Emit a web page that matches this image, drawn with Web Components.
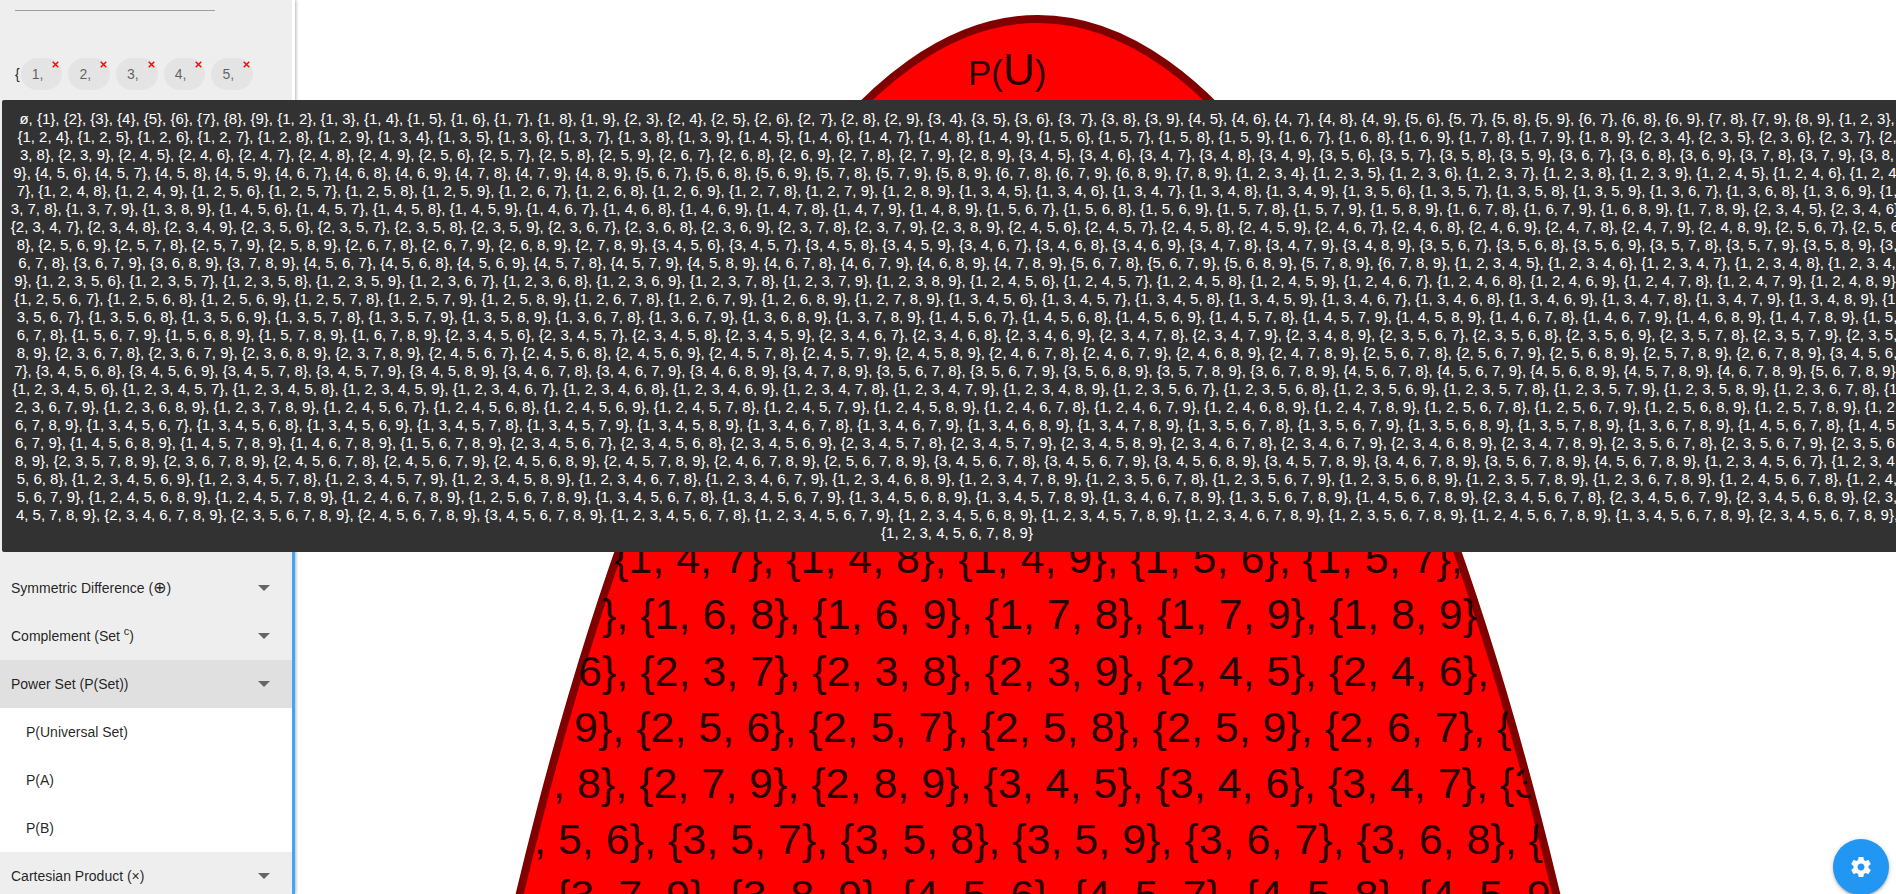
<!DOCTYPE html>
<html lang="en">
<head>
<meta charset="utf-8">
<title>Set Operations Visualizer</title>
<style>
  html, body { margin: 0; height: 100%; overflow: hidden; background: #fff; }
  body { font-family: "Liberation Sans", Arial, sans-serif; font-size: 15px; color: rgba(0, 0, 0, .87); }
</style>
</head>
<body>
<set-app></set-app>

<template id="set-app">
  <style>
    :host { display: flex; height: 100vh; position: relative; overflow: hidden; }
    set-sidebar { flex: none; width: 292px; }
    set-diagram { flex: 1; min-width: 0; }
    set-tooltip { position: absolute; left: 2px; right: -16px; top: 100px; z-index: 2; }
    set-fab { position: absolute; right: 7px; bottom: -1px; z-index: 1; }
    .symbol { font-family: "DejaVu Sans", sans-serif; font-size: 16px; line-height: 1; }
  </style>
  <set-sidebar>
    <set-chip>1,</set-chip>
    <set-chip>2,</set-chip>
    <set-chip>3,</set-chip>
    <set-chip>4,</set-chip>
    <set-chip>5,</set-chip>
    <set-row slot="ops">Symmetric Difference (<span class="symbol">⊕</span>)</set-row>
    <set-row slot="ops">Complement (Set <sup>c</sup>)</set-row>
    <set-row slot="ops" active>Power Set (P(Set))</set-row>
    <set-row slot="ops" sub>P(Universal Set)</set-row>
    <set-row slot="ops" sub>P(A)</set-row>
    <set-row slot="ops" sub>P(B)</set-row>
    <set-row slot="ops">Cartesian Product (×)</set-row>
  </set-sidebar>
  <set-diagram></set-diagram>
  <set-tooltip></set-tooltip>
  <set-fab></set-fab>
</template>

<template id="set-sidebar">
  <style>
    :host { display: flex; flex-direction: column; position: relative; background: #eee;
            border-right: 3px solid #fff; box-shadow: 1px 0 3px rgba(0, 0, 0, .3); z-index: 1; }
    .thumb { position: absolute; left: 100%; top: 300px; bottom: 0; width: 3px; background: #42a5f5; }
    input { display: block; box-sizing: border-box; width: 200px; height: 11px; margin: 0 15px; padding: 0;
            border: 0; border-bottom: 1px solid #9e9e9e; background: none; outline: none; font: inherit; }
    .members { display: flex; align-items: center; height: 32px; margin: 47px 0 0 15px; font-size: 14px; }
    .chips { display: flex; gap: 6px; margin-left: 1px; }
    nav { display: flex; flex-direction: column; margin-top: 474px; }
  </style>
  <input type="text" aria-label="Universal set members">
  <div class="members"><span>{</span><div class="chips"><slot></slot></div></div>
  <nav><slot name="ops"></slot></nav>
  <div class="thumb"></div>
</template>

<template id="set-chip">
  <style>
    :host { display: block; position: relative; flex: none; box-sizing: border-box; height: 32px;
            padding: 0 19px 0 11px; border-radius: 16px; background: #e4e4e4;
            font-size: 14px; line-height: 32px; color: rgba(0, 0, 0, .6); }
    button { position: absolute; top: 3px; right: 3px; width: 7px; height: 7px; padding: 0; border: 0; background: none; display: block; }
    svg { display: block; }
  </style>
  <slot></slot>
  <button type="button" aria-label="Remove"><svg width="7" height="7" viewBox="0 0 7 7"><path d="M.7 .7L6.3 6.3M6.3 .7L.7 6.3" stroke="#f00" stroke-width="1.4"/></svg></button>
</template>

<template id="set-row">
  <style>
    :host { display: block; }
    button { display: flex; align-items: center; justify-content: space-between; box-sizing: border-box;
             width: 100%; height: 48px; margin: 0; padding: 0 22px 0 11px; border: 0; background: #eee;
             font: inherit; font-size: 14px; color: inherit; text-align: left; }
    :host([active]) button { background: #e0e0e0; }
    :host([sub]) button { background: #fff; padding-left: 26px; }
    :host([sub]) svg { display: none; }
    ::slotted(sup) { font-size: 11px; line-height: 0; }
  </style>
  <button type="button"><span><slot></slot></span><svg width="12" height="6" viewBox="0 0 12 6"><path d="M0 0h12L6 6z" fill="#666"/></svg></button>
</template>

<template id="set-diagram">
  <style>
    :host { display: block; position: relative; overflow: hidden; }
    svg { display: block; width: 100%; height: 100%; }
    text { font-family: "Liberation Sans", Arial, sans-serif; font-size: 43px; fill: #000; fill-opacity: .87; white-space: pre; }
    .title { font-size: 35px; }
    .title .name { font-size: 44px; }
  </style>
  <svg role="img" aria-label="Power set of U">
    <defs><clipPath id="inside"><ellipse cx="743" cy="2717" rx="702" ry="2697"/></clipPath></defs>
    <ellipse cx="743" cy="2717" rx="703" ry="2698" fill="#f00" stroke="#800000" stroke-width="8"/>
    <text class="title" x="673" y="85">P(<tspan class="name">U</tspan>)</text>
    <g class="lines" clip-path="url(#inside)"></g>
  </svg>
</template>

<template id="set-tooltip">
  <style>
    :host { display: block; box-sizing: border-box; padding: 10px 8px; border-radius: 2px; background: #323232;
            color: #fff; font-size: 15px; line-height: 18px; text-align: center; }
  </style>
  <div class="text"></div>
</template>

<template id="set-fab">
  <style>
    :host { display: block; }
    button { display: flex; align-items: center; justify-content: center; width: 56px; height: 56px; padding: 0; border: 0;
             border-radius: 50%; background: #2196f3;
             box-shadow: 0 2px 2px rgba(0, 0, 0, .14), 0 3px 1px -2px rgba(0, 0, 0, .12), 0 1px 5px rgba(0, 0, 0, .2); }
  </style>
  <button type="button" aria-label="Settings">
    <svg width="24" height="24" viewBox="0 0 24 24" fill="#fff"><path d="M19.43 12.98c.04-.32.07-.64.07-.98s-.03-.66-.07-.98l2.11-1.65c.19-.15.24-.42.12-.64l-2-3.46c-.12-.22-.39-.3-.61-.22l-2.49 1c-.52-.4-1.08-.73-1.69-.98l-.38-2.65C14.46 2.18 14.25 2 14 2h-4c-.25 0-.46.18-.49.42l-.38 2.65c-.61.25-1.17.59-1.69.98l-2.49-1c-.23-.09-.49 0-.61.22l-2 3.46c-.13.22-.07.49.12.64l2.11 1.65c-.04.32-.07.65-.07.98s.03.66.07.98l-2.11 1.65c-.19.15-.24.42-.12.64l2 3.46c.12.22.39.3.61.22l2.49-1c.52.4 1.08.73 1.69.98l.38 2.65c.03.24.24.42.49.42h4c.25 0 .46-.18.49-.42l.38-2.65c.61-.25 1.17-.59 1.69-.98l2.49 1c.23.09.49 0 .61-.22l2-3.46c.12-.22.07-.49-.12-.64l-2.11-1.65zM12 15.5c-1.93 0-3.5-1.57-3.5-3.5s1.57-3.5 3.5-3.5 3.5 1.57 3.5 3.5-1.57 3.5-3.5 3.5z"/></svg>
  </button>
</template>

<script>
  class TemplateElement extends HTMLElement {
    constructor() {
      super();
      const template = document.getElementById(this.localName);
      this.attachShadow({ mode: 'open' }).append(template.content.cloneNode(true));
    }
  }

  // All k-element subsets of 1..n, in dictionary order.
  function subsets(n, k, from = 1) {
    if (k === 0) return [[]];
    const out = [];
    for (let i = from; i <= n; i++)
      for (const rest of subsets(n, k - 1, i + 1)) out.push([i, ...rest]);
    return out;
  }
  const format = (set) => set.length ? '{' + set.join(', ') + '}' : 'ø';

  class SetTooltip extends TemplateElement {
    connectedCallback() {
      const all = [];
      for (let k = 0; k <= 9; k++) all.push(...subsets(9, k));
      this.shadowRoot.querySelector('.text').textContent = all.map(format).join(', ');
    }
  }

  class SetDiagram extends TemplateElement {
    connectedCallback() {
      const lines = [
        [319, 573, '{1, 4, 7}, {1, 4, 8}, {1, 4, 9}, {1, 5, 6}, {1, 5, 7},'],
        [307, 629, '}, {1, 6, 8}, {1, 6, 9}, {1, 7, 8}, {1, 7, 9}, {1, 8, 9}'],
        [283, 686, '6}, {2, 3, 7}, {2, 3, 8}, {2, 3, 9}, {2, 4, 5}, {2, 4, 6},'],
        [279, 742, '9}, {2, 5, 6}, {2, 5, 7}, {2, 5, 8}, {2, 5, 9}, {2, 6, 7}, {'],
        [258, 798, ', 8}, {2, 7, 9}, {2, 8, 9}, {3, 4, 5}, {3, 4, 6}, {3, 4, 7}, {3'],
        [239, 854, ', 5, 6}, {3, 5, 7}, {3, 5, 8}, {3, 5, 9}, {3, 6, 7}, {3, 6, 8}, {'],
        [261, 910, '{3, 7, 9}, {3, 8, 9}, {4, 5, 6}, {4, 5, 7}, {4, 5, 8}, {4, 5, 9'],
      ];
      const group = this.shadowRoot.querySelector('.lines');
      for (const [x, y, string] of lines) {
        const text = document.createElementNS('http://www.w3.org/2000/svg', 'text');
        text.setAttribute('x', x);
        text.setAttribute('y', y);
        text.textContent = string;
        group.append(text);
      }
    }
  }

  customElements.define('set-chip', class extends TemplateElement {});
  customElements.define('set-row', class extends TemplateElement {});
  customElements.define('set-sidebar', class extends TemplateElement {});
  customElements.define('set-fab', class extends TemplateElement {});
  customElements.define('set-tooltip', SetTooltip);
  customElements.define('set-diagram', SetDiagram);
  customElements.define('set-app', class extends TemplateElement {});
</script>
</body>
</html>
